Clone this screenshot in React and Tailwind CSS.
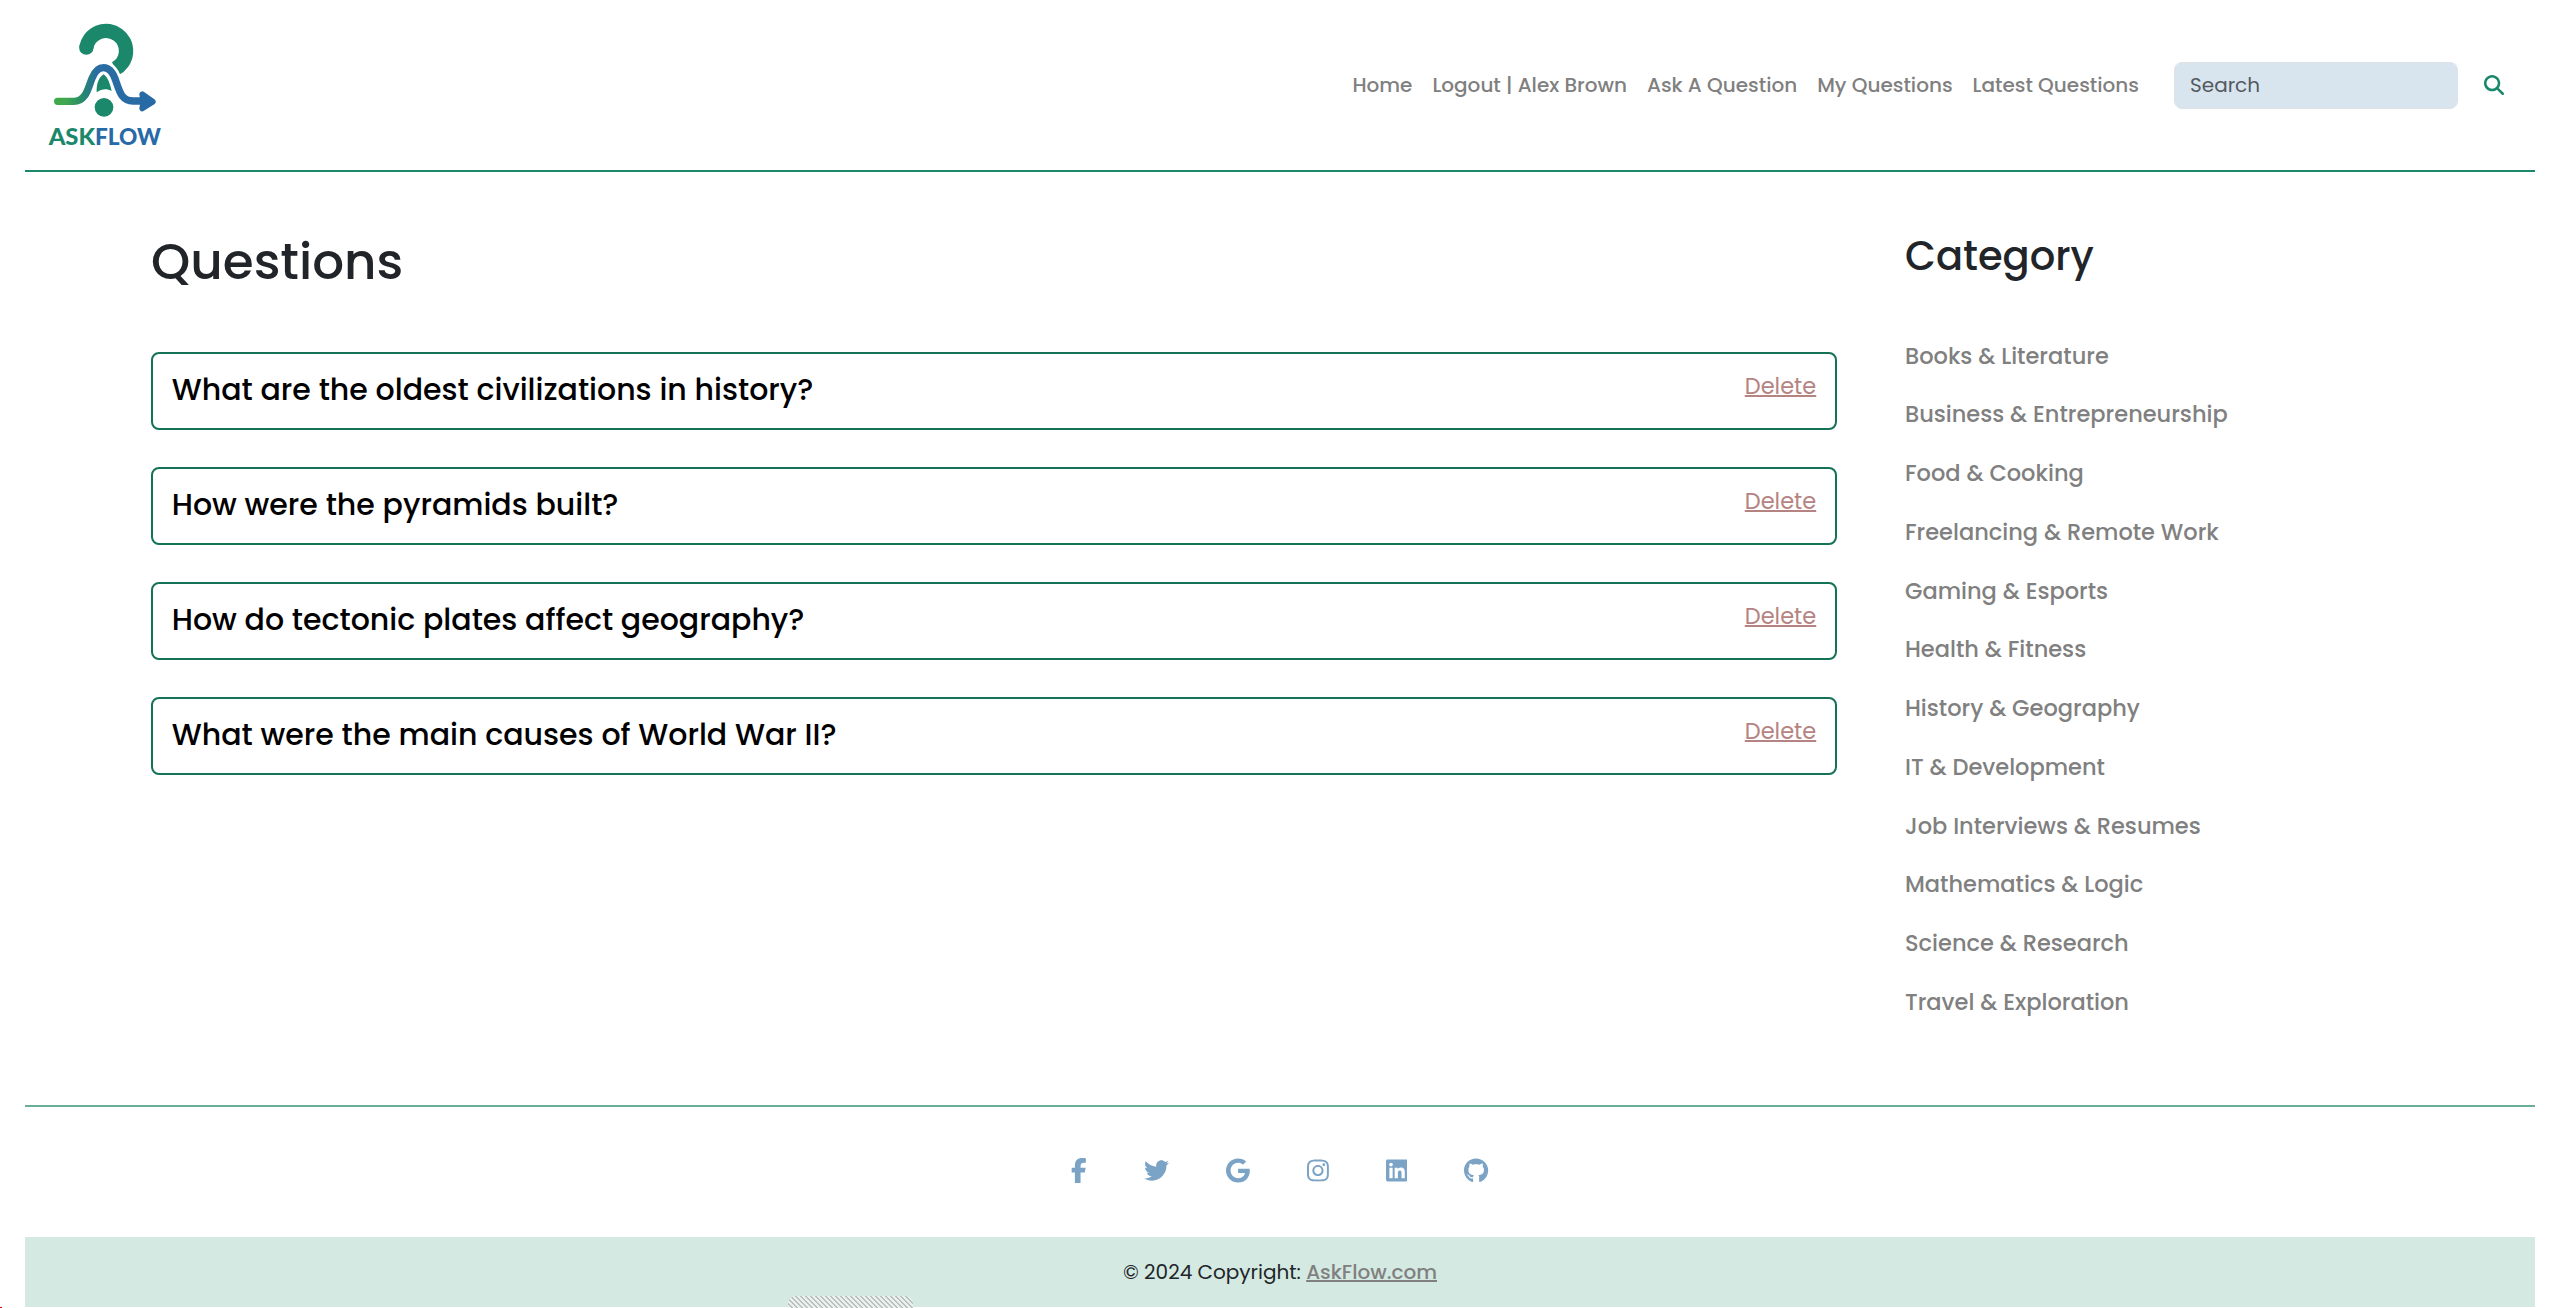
import React from "react";
import { FaFacebookF, FaTwitter, FaGoogle, FaInstagram, FaLinkedin, FaGithub } from "react-icons/fa6";

const navLinks = ["Home", "Logout | Alex Brown", "Ask A Question", "My Questions", "Latest Questions"];

const questions = [
  "What are the oldest civilizations in history?",
  "How were the pyramids built?",
  "How do tectonic plates affect geography?",
  "What were the main causes of World War II?",
];

const categories = [
  "Books & Literature",
  "Business & Entrepreneurship",
  "Food & Cooking",
  "Freelancing & Remote Work",
  "Gaming & Esports",
  "Health & Fitness",
  "History & Geography",
  "IT & Development",
  "Job Interviews & Resumes",
  "Mathematics & Logic",
  "Science & Research",
  "Travel & Exploration",
];

const socials = [
  { Icon: FaFacebookF, width: "w-[15.6px]" },
  { Icon: FaTwitter, width: "w-[25px]" },
  { Icon: FaGoogle, width: "w-[23.8px]" },
  { Icon: FaInstagram, width: "w-[21.9px]" },
  { Icon: FaLinkedin, width: "w-[21.9px]" },
  { Icon: FaGithub, width: "w-[24.2px]" },
];

const flowCurve =
  "M38 259 H86 C124 259 130 216 141 190 C150 168 161 158 176 158 C193 158 203 170 212 196 C224 231 230 258 264 258 H298";

function Logo() {
  return (
    <svg viewBox="0 0 375 420" className="h-[140px] w-[125px]" fill="none">
      <defs>
        <linearGradient id="flow" gradientUnits="userSpaceOnUse" x1="28" y1="259" x2="330" y2="259">
          <stop offset="0" stopColor="#3faa49" />
          <stop offset="0.12" stopColor="#3fa64e" />
          <stop offset="0.28" stopColor="#258a6a" />
          <stop offset="0.42" stopColor="#2a6da3" />
          <stop offset="1" stopColor="#286aa6" />
        </linearGradient>
      </defs>
      <path d="M124 98 A60 60 0 1 1 211 161" stroke="#1b876b" strokeWidth="43" />
      <circle cx="124" cy="98" r="21.5" fill="#1b876b" />
      <path d="M155 232 C154 205 162 186 176 178 C188 186 195 205 200 228 C186 220 170 221 155 232 Z" fill="#1b876b" />
      <path d={flowCurve} stroke="white" strokeWidth="38" />
      <path d={flowCurve} stroke="url(#flow)" strokeWidth="22" strokeLinecap="round" />
      <path
        d="M292 238 L323 260 L292 280 L296 259 Z"
        fill="#286aa6"
        stroke="#286aa6"
        strokeWidth="18"
        strokeLinejoin="round"
      />
      <circle cx="177" cy="277" r="28" fill="#1b876b" />
      <g className="font-['Lato'] text-[67px] font-black">
        <text x="11" y="390" textLength="139" lengthAdjust="spacingAndGlyphs" fill="#1b876b">
          ASK
        </text>
        <text x="150" y="390" textLength="198" lengthAdjust="spacingAndGlyphs" fill="#286aa6">
          FLOW
        </text>
      </g>
    </svg>
  );
}

function SearchIcon() {
  return (
    <svg viewBox="0 0 512 512" className="size-5" fill="currentColor">
      <path d="M416 208c0 45.900-14.900 88.300-40 122.700L502.600 457.400c12.500 12.500 12.500 32.800 0 45.300s-32.800 12.500-45.300 0L330.700 376c-34.400 25.200-76.800 40-122.700 40C93.100 416 0 322.900 0 208S93.100 0 208 0S416 93.100 416 208zM208 352a144 144 0 1 0 0-288 144 144 0 1 0 0 288z" />
    </svg>
  );
}

function Header() {
  return (
    <header className="flex h-[172px] items-center border-b-2 border-[#1b876b] pr-[31px] pl-5">
      <Logo />
      <nav className="ml-auto flex gap-5 text-xl font-medium text-[#808080]">
        {navLinks.map((label) => (
          <a key={label} href="#" className="whitespace-nowrap">
            {label}
          </a>
        ))}
      </nav>
      <input
        type="text"
        placeholder="Search"
        className="ml-[35px] h-[47px] w-[284px] rounded-lg border border-[#dee2e6] bg-[#d9e5ee] px-[15px] text-xl placeholder:text-[#53595f]"
      />
      <button className="ml-[26px] text-[#1b876b]">
        <SearchIcon />
      </button>
    </header>
  );
}

function QuestionCard({ title }) {
  return (
    <article className="flex h-[78px] items-start justify-between rounded-lg border-2 border-[#147257] px-[18.75px]">
      <h2 className="mt-[18px] text-[30px] leading-9 font-medium text-black">{title}</h2>
      <a href="#" className="mt-[15.5px] text-[22.5px] leading-[33.75px] text-[#b58482] underline decoration-2">
        Delete
      </a>
    </article>
  );
}

export default function App() {
  return (
    <div className="relative flex h-[1308px] flex-col overflow-hidden bg-white px-[25px] font-['Poppins','Inter',sans-serif] text-[#212529]">
      <Header />

      <main className="flex h-[933px] pt-[60px] pl-[126px]">
        <section className="w-[1686px]">
          <h1 className="text-[50px] leading-[60px] font-medium">Questions</h1>
          <div className="mt-[60px] flex flex-col gap-[37px]">
            {questions.map((title) => (
              <QuestionCard key={title} title={title} />
            ))}
          </div>
        </section>
        <aside className="ml-[68px]">
          <h2 className="text-[40px] leading-[48px] font-medium">Category</h2>
          <ul className="mt-[59.5px] flex flex-col gap-[25px] text-[22.5px] leading-[33.75px] font-medium text-[#808080]">
            {categories.map((name) => (
              <li key={name}>{name}</li>
            ))}
          </ul>
        </aside>
      </main>

      <footer>
        <div className="flex h-[132px] items-center justify-center gap-[57px] border-t-2 border-[#6aae98] pb-[3px] text-[25px] text-[#7ba3c5]">
          {socials.map(({ Icon, width }, i) => (
            <Icon key={i} className={width} />
          ))}
        </div>
        <div className="flex h-[70px] items-center justify-center bg-[#d4e9e1] text-xl">
          <p>
            © 2024 Copyright:{" "}
            <a href="#" className="font-medium text-[#808080] underline decoration-2">
              AskFlow.com
            </a>
          </p>
        </div>
      </footer>

      <div className="absolute bottom-0 left-[788px] h-3 w-[125px] rounded-t-lg bg-[#e9f0ed] bg-[repeating-linear-gradient(45deg,transparent_0_2.4px,#b9c0bd_2.4px_3.54px)]" />
      <div className="absolute bottom-0 left-0 h-px w-0.5 bg-red-600" />
    </div>
  );
}
